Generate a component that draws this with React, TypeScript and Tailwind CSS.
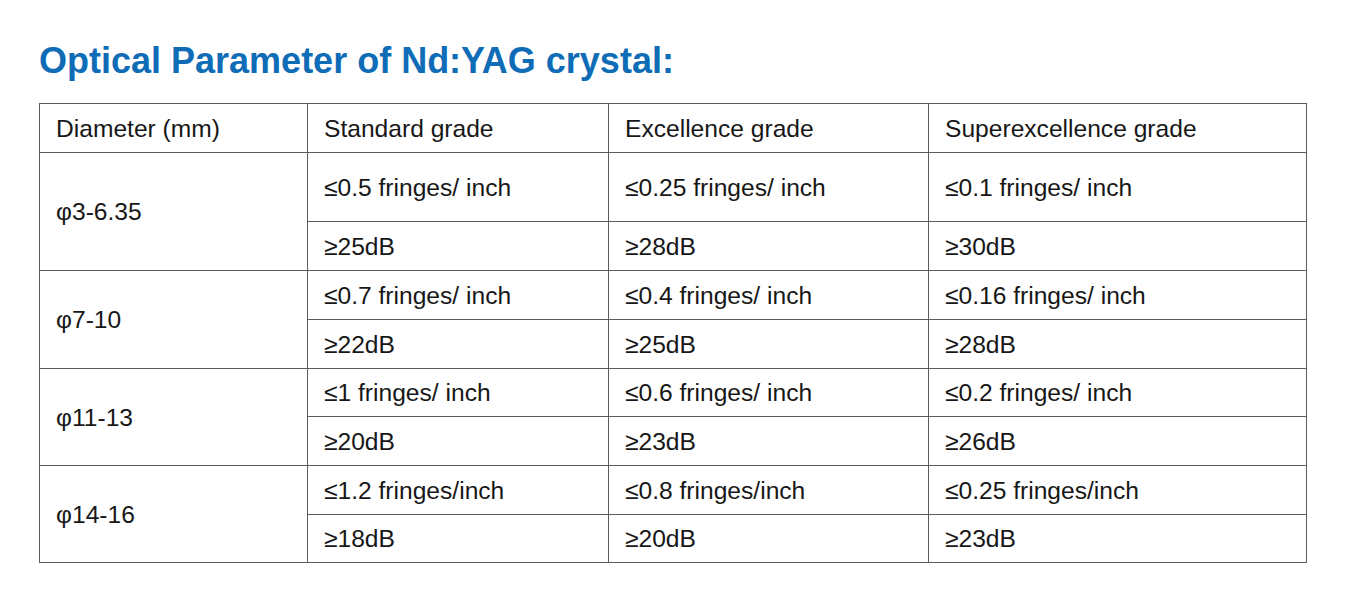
import React from "react";

const groups = [
  {
    d: "φ3-6.35",
    h: [69, 49],
    rows: [
      ["≤0.5 fringes/ inch", "≤0.25 fringes/ inch", "≤0.1 fringes/ inch"],
      ["≥25dB", "≥28dB", "≥30dB"],
    ],
  },
  {
    d: "φ7-10",
    h: [49, 49],
    rows: [
      ["≤0.7 fringes/ inch", "≤0.4 fringes/ inch", "≤0.16 fringes/ inch"],
      ["≥22dB", "≥25dB", "≥28dB"],
    ],
  },
  {
    d: "φ11-13",
    h: [48, 49],
    rows: [
      ["≤1 fringes/ inch", "≤0.6 fringes/ inch", "≤0.2 fringes/ inch"],
      ["≥20dB", "≥23dB", "≥26dB"],
    ],
  },
  {
    d: "φ14-16",
    h: [49, 48],
    rows: [
      ["≤1.2 fringes/inch", "≤0.8 fringes/inch", "≤0.25 fringes/inch"],
      ["≥18dB", "≥20dB", "≥23dB"],
    ],
  },
];

const cell = "border border-[#5c5c5c] pl-[16px] pr-2 pt-[2px] align-middle text-left font-normal";

export default function App() {
  return (
    <div
      className="min-h-[589px] bg-white pl-[39px] pt-[43px]"
      style={{ fontFamily: '"Liberation Sans", Arial, sans-serif' }}
    >
      <h1 className="h-[36px] text-[36px] font-bold leading-[36px] text-[#0f6cb6]">
        Optical Parameter of Nd:YAG crystal:
      </h1>
      <table className="mt-[24px] table-fixed border-collapse text-[24.6px] text-[#171717]">
        <colgroup>
          <col className="w-[268px]" />
          <col className="w-[301px]" />
          <col className="w-[320px]" />
          <col className="w-[378px]" />
        </colgroup>
        <thead>
          <tr className="h-[49px]">
            <th className={cell}>Diameter (mm)</th>
            <th className={cell}>Standard grade</th>
            <th className={cell}>Excellence grade</th>
            <th className={cell}>Superexcellence grade</th>
          </tr>
        </thead>
        <tbody>
          {groups.map((g) =>
            g.rows.map((r, i) => (
              <tr key={g.d + i} style={{ height: g.h[i] }}>
                {i === 0 && (
                  <td rowSpan={2} className={cell}>
                    {g.d}
                  </td>
                )}
                {r.map((c, j) => (
                  <td key={j} className={cell}>
                    {c}
                  </td>
                ))}
              </tr>
            ))
          )}
        </tbody>
      </table>
    </div>
  );
}
